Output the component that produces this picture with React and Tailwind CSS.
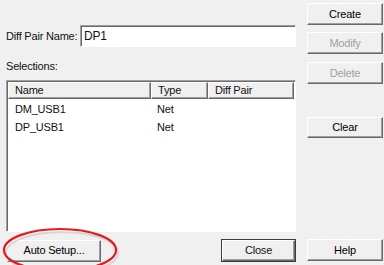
import React from "react";

const rows = [
  { name: "DM_USB1", type: "Net", pair: "" },
  { name: "DP_USB1", type: "Net", pair: "" },
];

function Btn({ children, disabled, isDefault, className = "" }) {
  const bevel =
    "border border-t-white border-l-white border-r-[#696969] border-b-[#696969] shadow-[inset_-1px_-1px_0_#a0a0a0]";
  if (isDefault) {
    return (
      <div className={`border border-[#3c3c3c] ${className}`}>
        <div className={`h-full flex items-center justify-center bg-[#f0f0f0] ${bevel}`}>{children}</div>
      </div>
    );
  }
  return (
    <div
      className={`flex items-center justify-center bg-[#f0f0f0] ${bevel} ${
        disabled ? "text-[#a0a0a0]" : "text-black"
      } ${className}`}
    >
      {children}
    </div>
  );
}

function HeaderCell({ children, w }) {
  return (
    <div
      className={`${w} h-full flex items-center pl-[6px] bg-[#f0f0f0] border border-t-white border-l-white border-r-[#696969] border-b-[#696969] shadow-[inset_-1px_-1px_0_#a0a0a0]`}
    >
      {children}
    </div>
  );
}

export default function App() {
  return (
    <div className="relative w-[384px] h-[265px] bg-[#f0f0f0] overflow-hidden text-[11px] tracking-[-0.2px] text-[#111] font-['Liberation_Sans',Arial,sans-serif] leading-none">
      <div className="flex">
        {/* left side */}
        <div className="w-[296px] pl-[6px] flex flex-col">
          <div className="mt-[25px] flex items-center h-[22px]">
            <span className="w-[74px] shrink-0 whitespace-nowrap">Diff Pair Name:</span>
            <div className="w-[216px] shrink-0 h-[22px] bg-white border border-t-[#a0a0a0] border-l-[#a0a0a0] border-r-white border-b-white shadow-[inset_1px_1px_0_#696969] flex items-center pl-[3px] text-[12px]">
              DP1
            </div>
          </div>

          <div className="mt-[14px] h-[11px] flex items-center">Selections:</div>

          <div className="mt-[8px] w-[290px] h-[152px] bg-white border border-t-[#a0a0a0] border-l-[#a0a0a0] border-r-white border-b-white shadow-[inset_1px_1px_0_#696969] pt-[1px] pl-[1px]">
            <div className="flex h-[17px]">
              <HeaderCell w="w-[143px]">Name</HeaderCell>
              <HeaderCell w="w-[57px]">Type</HeaderCell>
              <HeaderCell w="w-[86px]">Diff Pair</HeaderCell>
            </div>
            <div className="pt-[1px]">
              {rows.map((r) => (
                <div key={r.name} className="flex h-[18px] items-center">
                  <span className="w-[143px] pl-[7px]">{r.name}</span>
                  <span className="w-[57px] pl-[6px]">{r.type}</span>
                  <span className="w-[86px] pl-[6px]">{r.pair}</span>
                </div>
              ))}
            </div>
          </div>

          <div className="mt-[7px] flex justify-between items-center">
            <Btn className="ml-[1px] w-[94px] h-[22px]">Auto Setup...</Btn>
            <Btn isDefault className="w-[75px] h-[23px]">Close</Btn>
          </div>
        </div>

        {/* right side */}
        <div className="ml-[11px] w-[76px] flex flex-col">
          <Btn className="mt-[3px] h-[22px]">Create</Btn>
          <Btn disabled className="mt-[7px] h-[22px]">Modify</Btn>
          <Btn disabled className="mt-[8px] h-[22px]">Delete</Btn>
          <Btn className="mt-[33px] h-[21px]">Clear</Btn>
          <Btn className="mt-[101px] h-[22px]">Help</Btn>
        </div>
      </div>

      {/* annotation ring */}
      <svg className="absolute left-0 top-0 pointer-events-none" width="384" height="265">
        <ellipse cx="61" cy="251" rx="56" ry="21" fill="none" stroke="#bbb" strokeWidth="2" opacity="0.5" transform="translate(1 2)" />
        <ellipse cx="60" cy="250" rx="56" ry="21" fill="none" stroke="#e8191d" strokeWidth="2.2" />
      </svg>
    </div>
  );
}
